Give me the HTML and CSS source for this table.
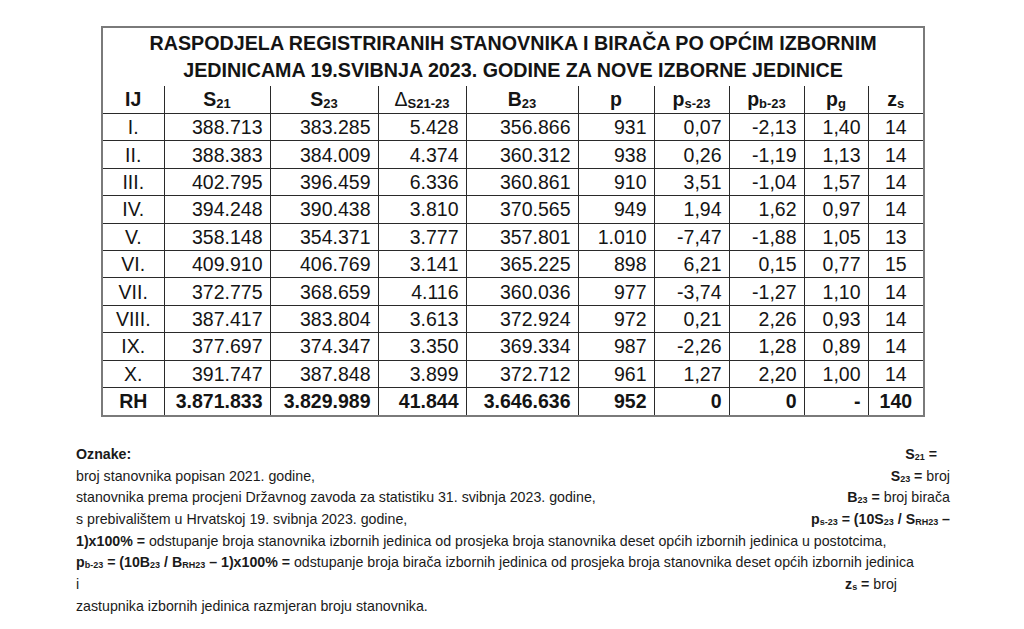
FILE: index.html
```html
<!DOCTYPE html>
<html lang="hr">
<head>
<meta charset="utf-8">
<title>Raspodjela</title>
<link rel="stylesheet" href="styles.css">
</head>
<body>
<div class="page">
  <table class="tbl">
    <colgroup>
      <col class="c1"><col class="c2"><col class="c3"><col class="c4"><col class="c5">
      <col class="c6"><col class="c7"><col class="c8"><col class="c9"><col class="c10">
    </colgroup>
    <thead>
      <tr><th colspan="10" class="title">RASPODJELA REGISTRIRANIH STANOVNIKA I BIRAČA PO OPĆIM IZBORNIM<br>JEDINICAMA 19.SVIBNJA 2023. GODINE ZA NOVE IZBORNE JEDINICE</th></tr>
      <tr class="hdr">
        <th>IJ</th>
        <th>S<sub class="hs">21</sub></th>
        <th>S<sub class="hs">23</sub></th>
        <th><span class="delta">Δ</span><sub class="hs">S21-23</sub></th>
        <th>B<sub class="hs">23</sub></th>
        <th>p</th>
        <th>p<sub class="hs">s-23</sub></th>
        <th>p<sub class="hs">b-23</sub></th>
        <th>p<sub class="hs">g</sub></th>
        <th>z<sub class="hs">s</sub></th>
      </tr>
    </thead>
    <tbody>
      <tr><td class="ij">I.</td><td>388.713</td><td>383.285</td><td>5.428</td><td>356.866</td><td>931</td><td>0,07</td><td>-2,13</td><td>1,40</td><td class="zs">14</td></tr>
      <tr><td class="ij">II.</td><td>388.383</td><td>384.009</td><td>4.374</td><td>360.312</td><td>938</td><td>0,26</td><td>-1,19</td><td>1,13</td><td class="zs">14</td></tr>
      <tr><td class="ij">III.</td><td>402.795</td><td>396.459</td><td>6.336</td><td>360.861</td><td>910</td><td>3,51</td><td>-1,04</td><td>1,57</td><td class="zs">14</td></tr>
      <tr><td class="ij">IV.</td><td>394.248</td><td>390.438</td><td>3.810</td><td>370.565</td><td>949</td><td>1,94</td><td>1,62</td><td>0,97</td><td class="zs">14</td></tr>
      <tr><td class="ij">V.</td><td>358.148</td><td>354.371</td><td>3.777</td><td>357.801</td><td>1.010</td><td>-7,47</td><td>-1,88</td><td>1,05</td><td class="zs">13</td></tr>
      <tr><td class="ij">VI.</td><td>409.910</td><td>406.769</td><td>3.141</td><td>365.225</td><td>898</td><td>6,21</td><td>0,15</td><td>0,77</td><td class="zs">15</td></tr>
      <tr><td class="ij">VII.</td><td>372.775</td><td>368.659</td><td>4.116</td><td>360.036</td><td>977</td><td>-3,74</td><td>-1,27</td><td>1,10</td><td class="zs">14</td></tr>
      <tr><td class="ij">VIII.</td><td>387.417</td><td>383.804</td><td>3.613</td><td>372.924</td><td>972</td><td>0,21</td><td>2,26</td><td>0,93</td><td class="zs">14</td></tr>
      <tr><td class="ij">IX.</td><td>377.697</td><td>374.347</td><td>3.350</td><td>369.334</td><td>987</td><td>-2,26</td><td>1,28</td><td>0,89</td><td class="zs">14</td></tr>
      <tr><td class="ij">X.</td><td>391.747</td><td>387.848</td><td>3.899</td><td>372.712</td><td>961</td><td>1,27</td><td>2,20</td><td>1,00</td><td class="zs">14</td></tr>
      <tr class="total"><td class="ij">RH</td><td>3.871.833</td><td>3.829.989</td><td>41.844</td><td>3.646.636</td><td>952</td><td>0</td><td>0</td><td>-</td><td class="zs">140</td></tr>
    </tbody>
  </table>

  <div class="notes">
    <div class="line"><b>Oznake:</b><span class="r r1"><b>S<sub>21</sub> =</b></span></div>
    <div class="line"><span>broj stanovnika popisan 2021. godine,</span><span class="r"><b>S<sub>23</sub> =</b> broj</span></div>
    <div class="line"><span>stanovnika prema procjeni Državnog zavoda za statistiku 31. svibnja 2023. godine,</span><span class="r"><b>B<sub>23</sub> =</b> broj birača</span></div>
    <div class="line"><span>s prebivalištem u Hrvatskoj 19. svibnja 2023. godine,</span><span class="r"><b>p<sub>s-23</sub> = (10S<sub>23</sub> / S<sub>RH23</sub> –</b></span></div>
    <div class="line"><span><b>1)x100% =</b> odstupanje broja stanovnika izbornih jedinica od prosjeka broja stanovnika deset općih izbornih jedinica u postotcima,</span></div>
    <div class="line"><span><b>p<sub>b-23</sub> = (10B<sub>23</sub> / B<sub>RH23</sub> – 1)x100% =</b> odstupanje broja birača izbornih jedinica od prosjeka broja stanovnika deset općih izbornih jedinica</span></div>
    <div class="line"><span>i</span><span class="r r7"><b>z<sub>s</sub> =</b> broj</span></div>
    <div class="line"><span>zastupnika izbornih jedinica razmjeran broju stanovnika.</span></div>
  </div>
</div>
</body>
</html>
```

FILE: styles.css
```css
html, body {
  margin: 0;
  padding: 0;
  background: #ffffff;
}

.page {
  width: 1024px;
  height: 629px;
  overflow: hidden;
  padding: 26px 0 0 101px;
  box-sizing: border-box;
  font-family: "Liberation Sans", Arial, sans-serif;
  color: #141414;
}

.tbl {
  border-collapse: collapse;
  table-layout: fixed;
  width: 822px;
  border: 2px solid #7a7a7a;
  font-size: 19.5px;
}

.c1 { width: 62px; }
.c2 { width: 106px; }
.c3 { width: 108px; }
.c4 { width: 88px; }
.c5 { width: 112px; }
.c6 { width: 76px; }
.c7 { width: 75px; }
.c8 { width: 75px; }
.c9 { width: 64px; }
.c10 { width: 56px; }

.title {
  height: 56px;
  padding: 2px 0 0;
  font-size: 19.7px;
  font-weight: bold;
  line-height: 27px;
  text-align: center;
  vertical-align: top;
  border: none;
}

.hdr th {
  height: 27px;
  padding: 0;
  font-weight: bold;
  text-align: center;
  border-left: 1px solid #2a2a2a;
  border-bottom: 1px solid #2a2a2a;
  line-height: 27px;
}

.hdr th:first-child {
  border-left: none;
}

.hs {
  font-size: 13px;
  vertical-align: -2px;
  line-height: 0;
}

.delta {
  font-weight: normal;
}

.tbl td {
  height: 26.4px;
  padding: 0 7px 0 0;
  text-align: right;
  line-height: 26px;
  border: 1px solid #2a2a2a;
  white-space: nowrap;
}

.tbl td.ij,
.tbl td.zs {
  text-align: center;
  padding: 0;
}

.total td {
  font-weight: bold;
  height: 27px;
}

.notes {
  width: 874px;
  margin: 27px 0 0 -25px;
  font-size: 14.2px;
  line-height: 21.7px;
  color: #1a1a1a;
}

.line {
  display: flex;
  justify-content: space-between;
  white-space: nowrap;
}

.notes sub {
  font-size: 9px;
  vertical-align: -1px;
  line-height: 0;
}

.r1 {
  margin-right: 13px;
}

.r7 {
  margin-right: 53px;
}
```
